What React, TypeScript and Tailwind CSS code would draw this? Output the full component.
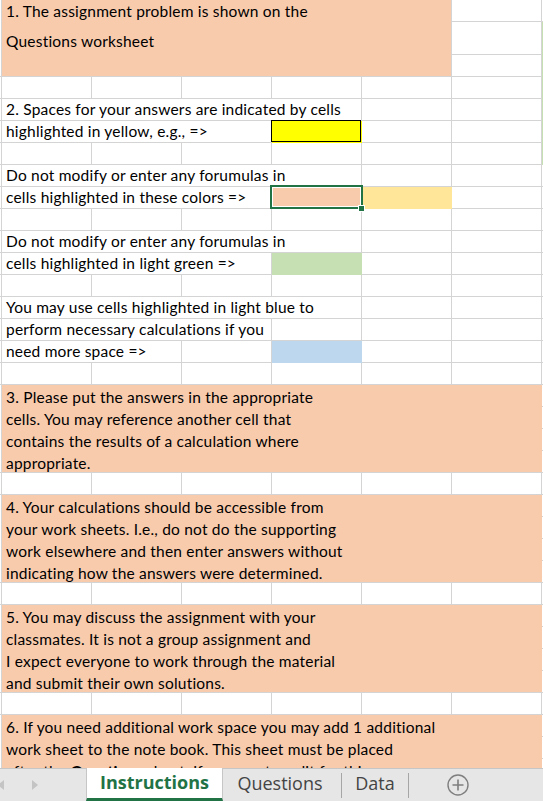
import type { ReactNode } from "react";

type Fill = "yellow" | "sel" | "lemon" | "green" | "blue";

interface LineRow {
  text?: ReactNode;
  span?: number; // how many columns the overflowing text covers
  fills?: Record<number, Fill>;
  edge?: boolean; // column H shows light green
}

const spanWidth: Record<number, string> = {
  1: "w-[90px]",
  2: "w-[180px]",
  3: "w-[270px]",
  4: "w-[360px]",
};

const fillClass: Record<Fill, string> = {
  yellow: "bg-[#FFFF00] border-[#FFFF00]",
  sel: "bg-[#F8CBAD] border-[#F8CBAD]",
  lemon: "bg-[#FFE699] border-[#FFE699]",
  green: "bg-[#C6E0B4] border-[#C6E0B4]",
  blue: "bg-[#BDD7EE] border-[#BDD7EE]",
};

const rows: LineRow[] = [
  { edge: true },
  { text: "2. Spaces for your answers are indicated by cells", span: 4, edge: true },
  { text: "highlighted in yellow, e.g., =>", span: 3, fills: { 3: "yellow" }, edge: true },
  { edge: true },
  { text: "Do not modify or enter any forumulas in", span: 4 },
  { text: "cells highlighted in these colors =>", span: 3, fills: { 3: "sel", 4: "lemon" } },
  {},
  { text: "Do not modify or enter any forumulas in", span: 4 },
  { text: "cells highlighted in light green =>", span: 3, fills: { 3: "green" } },
  {},
  { text: "You may use cells highlighted in light blue to", span: 4 },
  { text: "perform necessary calculations if you", span: 3 },
  { text: "need more space =>", span: 2, fills: { 3: "blue" } },
  {},
];

const blocks: ReactNode[][] = [
  [
    "3. Please put the answers in the appropriate",
    "cells. You may reference another cell that",
    "contains the results of a calculation where",
    "appropriate.",
  ],
  [
    "4. Your calculations should be accessible from",
    "your work sheets. I.e., do not do the supporting",
    "work elsewhere and then enter answers without",
    "indicating how the answers were determined.",
  ],
  [
    "5. You may discuss the assignment with your",
    "classmates. It is not a group assignment and",
    "I expect everyone to work through the material",
    "and submit their own solutions.",
  ],
  [
    "6. If you need additional work space you may add 1 additional",
    "work sheet to the note book. This sheet must be placed",
    <>
      after the <b>Questions</b> sheet. If you want credit for this
    </>,
  ],
];

function Gutter() {
  return <div className="w-[2px] shrink-0 h-full border-r border-b border-[#D4D4D4]" />;
}

function Cell({ fill }: { fill?: Fill }) {
  if (!fill) {
    return <div className="w-[90px] shrink-0 h-full border-r border-b border-[#D4D4D4]" />;
  }
  return (
    <div className={`relative w-[90px] shrink-0 h-full border-r border-b ${fillClass[fill]}`}>
      {fill === "yellow" && (
        <div className="absolute -top-px -left-px right-0 bottom-0 border border-black" />
      )}
      {fill === "sel" && (
        <>
          <div className="absolute -top-[2px] -left-[2px] -right-[2px] -bottom-[1px] border-2 border-[#217346] z-10">
            <div className="w-full h-full border border-white" />
          </div>
          <div className="absolute -right-[4px] -bottom-[4px] w-[7px] h-[7px] bg-[#217346] border border-white z-20" />
        </>
      )}
    </div>
  );
}

function SheetRow({ text, span = 0, fills = {}, edge }: LineRow) {
  const rest = [];
  for (let c = span; c < 6; c++) {
    rest.push(<Cell key={c} fill={fills[c]} />);
  }
  return (
    <div className="flex h-[22px] shrink-0">
      <Gutter />
      {span > 0 && (
        <div
          className={`${spanWidth[span]} shrink-0 h-full border-r border-b border-[#D4D4D4] pl-[4px] leading-[21px] whitespace-nowrap`}
        >
          {text}
        </div>
      )}
      {rest}
      <div className={`w-px shrink-0 h-full ${edge ? "bg-[#C6E0B4]" : "border-b border-[#D4D4D4]"}`} />
    </div>
  );
}

function PeachBlock({ lines }: { lines: ReactNode[] }) {
  return (
    <div className="flex shrink-0 h-[88px]">
      <Gutter />
      <div className="w-[540px] shrink-0 h-full bg-[#F8CBAD] border-b border-[#D4D4D4] pl-[4px] pt-px whitespace-nowrap">
        {lines.map((l, i) => (
          <div key={i} className="leading-[22px]">
            {l}
          </div>
        ))}
      </div>
      <div className="w-px shrink-0 flex flex-col">
        <div className="h-[22px] border-b border-[#D4D4D4]" />
        <div className="h-[22px] border-b border-[#D4D4D4]" />
        <div className="h-[22px] border-b border-[#D4D4D4]" />
        <div className="h-[22px] border-b border-[#D4D4D4]" />
      </div>
    </div>
  );
}

function TopBlock() {
  return (
    <div className="flex h-[77px] shrink-0">
      <Gutter />
      <div className="w-[450px] shrink-0 h-full bg-[#F8CBAD] border-r border-b border-[#D4D4D4] pl-[4px] whitespace-nowrap">
        <div className="leading-[21px] mt-px">1. The assignment problem is shown on the</div>
        <div className="leading-[21px] mt-[9px]">Questions worksheet</div>
      </div>
      <div className="w-[90px] shrink-0 flex flex-col">
        <div className="h-[22px] border-r border-b border-[#D4D4D4]" />
        <div className="h-[33px] border-r border-b border-[#D4D4D4]" />
        <div className="h-[22px] border-r border-b border-[#D4D4D4]" />
      </div>
      <div className="w-px shrink-0 flex flex-col">
        <div className="h-[22px] border-b border-[#D4D4D4]" />
        <div className="h-[55px] bg-[#C6E0B4]" />
      </div>
    </div>
  );
}

function TabBar() {
  return (
    <div className="h-[33px] shrink-0 flex items-stretch bg-[#E6E6E6] border-t border-[#C6C6C6] font-['Open_Sans',sans-serif] text-[18px] text-[#444444]">
      <div className="w-[86px] shrink-0 flex items-center">
        <svg width="6" height="10" viewBox="0 0 6 10" className="ml-[-2px]">
          <path d="M6 0 L0 5 L6 10 Z" fill="#C4C4C4" />
        </svg>
        <svg width="6" height="10" viewBox="0 0 6 10" className="ml-[28px]">
          <path d="M0 0 L6 5 L0 10 Z" fill="#C4C4C4" />
        </svg>
      </div>
      <div className="w-[137px] shrink-0 -mt-px bg-white border-x border-[#C6C6C6] border-b-[3px] border-b-[#217346] flex items-center justify-center pb-[1px]">
        <span className="font-bold text-[#217346]">Instructions</span>
      </div>
      <div className="w-[118px] shrink-0 flex items-center justify-center pb-[3px] pr-[4px]">Questions</div>
      <div className="w-px shrink-0 self-center h-[25px] bg-[#A6A6A6]" />
      <div className="w-[66px] shrink-0 flex items-center justify-center pb-[3px]">Data</div>
      <div className="w-px shrink-0 self-center h-[25px] bg-[#A6A6A6]" />
      <div className="flex items-center ml-[38px]">
        <svg width="22" height="22" viewBox="0 0 22 22">
          <circle cx="11" cy="11" r="10" fill="none" stroke="#7F7F7F" strokeWidth="1.4" />
          <path d="M11 5.5 V16.5 M5.5 11 H16.5" stroke="#7F7F7F" strokeWidth="1.6" />
        </svg>
      </div>
    </div>
  );
}

export default function App() {
  return (
    <div className="w-[543px] h-[801px] overflow-hidden flex flex-col bg-white">
      <div className="flex-1 overflow-hidden flex flex-col font-['Lato',sans-serif] text-[15.5px] tracking-[0.2px] text-black">
        <TopBlock />
        {rows.map((r, i) => (
          <SheetRow key={i} {...r} />
        ))}
        {blocks.map((b, i) => (
          <div key={i} className="flex flex-col shrink-0">
            <PeachBlock lines={b} />
            {i < blocks.length - 1 && <SheetRow />}
          </div>
        ))}
      </div>
      <TabBar />
    </div>
  );
}
